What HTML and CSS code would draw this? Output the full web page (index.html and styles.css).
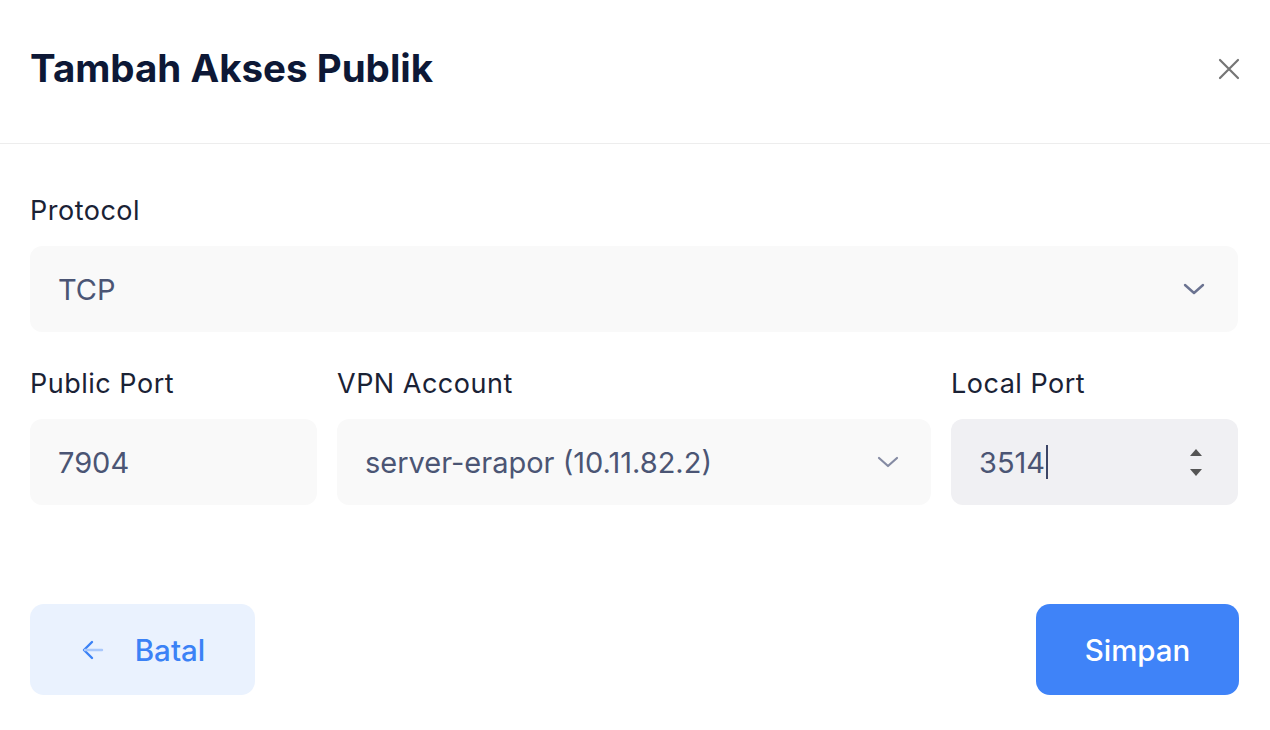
FILE: index.html
```html
<!DOCTYPE html>
<html>
<head>
<title>Tambah Akses Publik</title>
<link rel="stylesheet" href="styles.css">
</head>
<body>

<div class="modal">
  <div class="modal-header">
    <h2 class="modal-title">Tambah Akses Publik</h2>
    <button class="close-btn" aria-label="Tutup">
      <svg width="22" height="22" viewBox="0 0 22 22" fill="none" stroke="currentColor" stroke-width="2.2" stroke-linecap="round">
        <path d="M2 2 L20 20 M20 2 L2 20"/>
      </svg>
    </button>
  </div>

  <div class="modal-body">
    <div class="field">
      <label class="label">Protocol</label>
      <div class="select">
        <span>TCP</span>
        <svg class="chevron" width="22" height="12" viewBox="0 0 22 12" fill="none" stroke="currentColor" stroke-width="2.4" stroke-linecap="round" stroke-linejoin="round">
          <path d="M2 2 L11 10 L20 2"/>
        </svg>
      </div>
    </div>

    <div class="row">
      <div class="field">
        <label class="label">Public Port</label>
        <div class="input">7904</div>
      </div>
      <div class="field span-2">
        <label class="label">VPN Account</label>
        <div class="select">
          <span>server-erapor (10.11.82.2)</span>
          <svg class="chevron light" width="22" height="12" viewBox="0 0 22 12" fill="none" stroke="currentColor" stroke-width="2.2" stroke-linecap="round" stroke-linejoin="round">
            <path d="M2 2 L11 10 L20 2"/>
          </svg>
        </div>
      </div>
      <div class="field">
        <label class="label">Local Port</label>
        <div class="input focused">
          <span class="value">3514<span class="caret"></span></span>
          <span class="spinner">
            <span class="up"></span>
            <span class="down"></span>
          </span>
        </div>
      </div>
    </div>
  </div>

  <div class="modal-footer">
    <button class="btn btn-back">
      <svg width="24" height="22" viewBox="0 0 24 22" fill="none" stroke-width="2.4" stroke-linecap="round" stroke-linejoin="round">
        <path d="M12 3 L4 11 L12 19" stroke="#3b82f6"/>
        <path d="M5 11 L22 11" stroke="#a9c8fb"/>
      </svg>
      <span>Batal</span>
    </button>
    <button class="btn btn-primary">Simpan</button>
  </div>
</div>

</body>
</html>
```

FILE: styles.css
```css
body {
  margin: 0;
  background-color: #fff;
  font-family: "Inter", "Noto Sans", sans-serif;
}

.modal {
  width: 1270px;
  height: 730px;
  background-color: #fff;
}

.modal-header {
  display: flex;
  align-items: center;
  justify-content: space-between;
  padding: 40px 30px 47px;
  border-bottom: 1px solid #ededed;
}

.modal-title {
  margin: 0;
  font-size: 38.5px;
  line-height: 56px;
  font-weight: 700;
  color: #0d1836;
}

.close-btn {
  border: none;
  background: none;
  padding: 0;
  color: #757575;
  display: flex;
  margin-top: 2px;
}

.modal-body {
  padding: 47px 32px 0 30px;
}

.field {
  display: flex;
  flex-direction: column;
}

.label {
  font-size: 27px;
  line-height: 40px;
  font-weight: 400;
  letter-spacing: 0.5px;
  color: #1a2235;
  margin-bottom: 15px;
}

.select,
.input {
  height: 86px;
  box-sizing: border-box;
  display: flex;
  align-items: center;
  justify-content: space-between;
  padding: 0 28px;
  background-color: #f9f9f9;
  border-radius: 12px;
  font-size: 29px;
  color: #4b5574;
}

.chevron {
  color: #6b7391;
  margin-right: 5px;
}

.chevron.light {
  color: #858ba3;
  margin-right: 4px;
}

.row {
  display: grid;
  grid-template-columns: repeat(4, 1fr);
  gap: 20px;
  margin-top: 32px;
}

.span-2 {
  grid-column: span 2;
}

.input.focused {
  background-color: #f0f0f3;
}

.value {
  display: flex;
  align-items: center;
}

.caret {
  display: inline-block;
  width: 2px;
  height: 34px;
  margin-left: 1px;
  background-color: #3c4566;
}

.spinner {
  display: flex;
  flex-direction: column;
  gap: 13px;
  margin-right: 8px;
}

.up,
.down {
  width: 0;
  height: 0;
  border-left: 6px solid transparent;
  border-right: 6px solid transparent;
}

.up {
  border-bottom: 7px solid #555;
}

.down {
  border-top: 7px solid #555;
}

.modal-footer {
  display: flex;
  justify-content: space-between;
  padding: 0 31px 0 30px;
  margin-top: 99px;
}

.btn {
  height: 91px;
  border: none;
  border-radius: 14px;
  font-family: inherit;
  font-size: 29.5px;
  font-weight: 500;
  display: flex;
  align-items: center;
  justify-content: center;
  cursor: pointer;
}

.btn-back {
  width: 225px;
  gap: 31px;
  background-color: #eaf2fe;
  color: #3b82f6;
}

.btn-primary {
  width: 203px;
  background-color: #3f83f8;
  color: #fff;
}
```
